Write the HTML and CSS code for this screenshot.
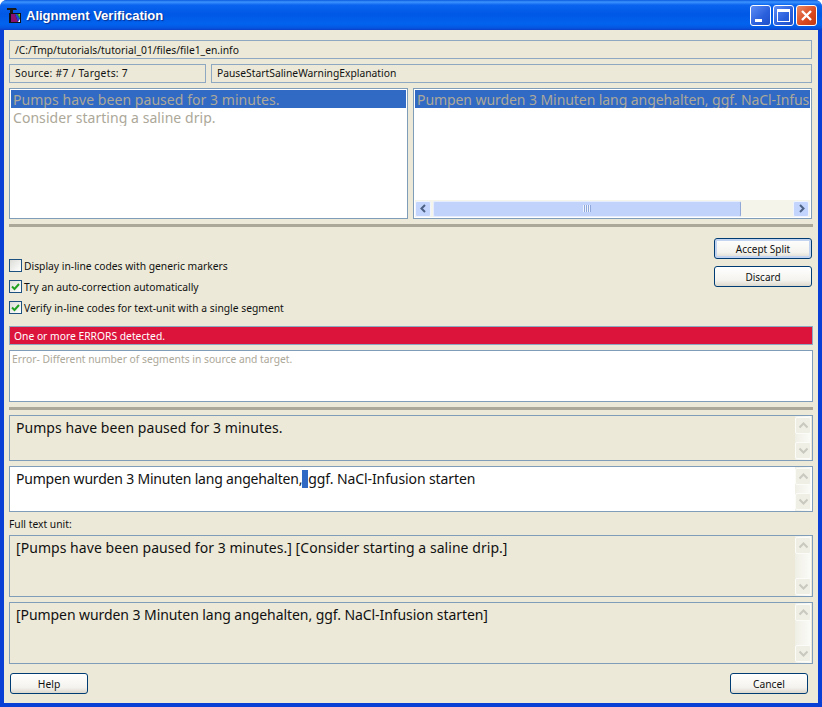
FILE: index.html
```html
<!DOCTYPE html>
<html lang="en">
<head>
<meta charset="utf-8">
<title>Alignment Verification</title>
<link rel="stylesheet" href="styles.css">
</head>
<body>
<div class="window">
  <header class="titlebar">
    <svg class="app-icon" width="16" height="16" viewBox="0 0 16 16"><path d="M1 1h9l1 2H1zM4 3h3v4H4z" fill="#1a1a1a"/><path d="M3 6h12v10H3z" fill="#101018"/><path d="M5 7h4l3 8H5z" fill="#8a1070"/><path d="M9 7h2l3 5v3h-2z" fill="#2040d8"/><path d="M11 7h3v5z" fill="#30b040"/><path d="M14 7v2l-1-2z" fill="#f0d020"/><path d="M14 12v3h-2z" fill="#f4f4f4"/></svg>
    <span class="title">Alignment Verification</span>
    <div class="controls">
      <span class="ctl ctl-min"><i class="min-glyph"></i></span>
      <span class="ctl ctl-max"><i class="max-glyph"></i></span>
      <span class="ctl ctl-close"><svg width="13" height="13" viewBox="0 0 13 13"><path d="M2 2l9 9M11 2l-9 9" stroke="#fff" stroke-width="2.4"/></svg></span>
    </div>
  </header>
  <main class="content">
    <div class="field path">/C:/Tmp/tutorials/tutorial_01/files/file1_en.info</div>
    <div class="row info">
      <div class="field source">Source: #7 / Targets: 7</div>
      <div class="field key">PauseStartSalineWarningExplanation</div>
    </div>
    <div class="row lists">
      <div class="list list-left">
        <div class="seg selected">Pumps have been paused for 3 minutes.</div>
        <div class="seg">Consider starting a saline drip.</div>
      </div>
      <div class="list list-right">
        <div class="seg selected de-full">Pumpen wurden 3 Minuten lang angehalten, ggf. NaCl-Infusion starten</div>
        <div class="hscroll">
          <span class="sbtn"><svg width="9" height="9" viewBox="0 0 9 9"><path d="M6 1L2.500 4.500 6 8" fill="none" stroke="#4d6185" stroke-width="2"/></svg></span>
          <span class="thumb"><i class="grip"></i></span>
          <span class="sbtn"><svg width="9" height="9" viewBox="0 0 9 9"><path d="M3 1l3.500 3.500L3 8" fill="none" stroke="#4d6185" stroke-width="2"/></svg></span>
        </div>
      </div>
    </div>
    <hr class="sep sep-top">
    <div class="row options">
      <div class="checks">
        <label class="check"><span class="box"></span>Display in-line codes with generic markers</label>
        <label class="check"><span class="box"><svg width="11" height="11" viewBox="0 0 11 11"><path d="M2 5.500l2.500 2.500L9 3" fill="none" stroke="#21a121" stroke-width="2"/></svg></span>Try an auto-correction automatically</label>
        <label class="check"><span class="box"><svg width="11" height="11" viewBox="0 0 11 11"><path d="M2 5.500l2.500 2.500L9 3" fill="none" stroke="#21a121" stroke-width="2"/></svg></span>Verify in-line codes for text-unit with a single segment</label>
      </div>
      <div class="actions">
        <button class="btn btn-wide btn-default">Accept Split</button>
        <button class="btn btn-wide">Discard</button>
      </div>
    </div>
    <div class="errorbar">One or more ERRORS detected.</div>
    <div class="errorbox">Error- Different number of segments in source and target.</div>
    <hr class="sep sep-bottom">
    <div class="editor short readonly">
      <div class="text">Pumps have been paused for 3 minutes.</div>
      <div class="vscroll">
        <span class="vbtn"><svg width="11" height="9" viewBox="0 0 11 9"><path d="M1.500 6.500l4-4 4 4" fill="none" stroke="#c9c9c0" stroke-width="2"/></svg></span>
        <span class="vbtn"><svg width="11" height="9" viewBox="0 0 11 9"><path d="M1.500 2.500l4 4 4-4" fill="none" stroke="#c9c9c0" stroke-width="2"/></svg></span>
      </div>
    </div>
    <div class="editor short white">
      <div class="text"><span class="de">Pumpen wurden 3 Minuten lang angehalten,</span><span class="caret"> </span><span class="de-tail">ggf. NaCl-Infusion starten</span></div>
      <div class="vscroll">
        <span class="vbtn"><svg width="11" height="9" viewBox="0 0 11 9"><path d="M1.500 6.500l4-4 4 4" fill="none" stroke="#c9c9c0" stroke-width="2"/></svg></span>
        <span class="vbtn"><svg width="11" height="9" viewBox="0 0 11 9"><path d="M1.500 2.500l4 4 4-4" fill="none" stroke="#c9c9c0" stroke-width="2"/></svg></span>
      </div>
    </div>
    <div class="unit-label">Full text unit:</div>
    <div class="editor tall readonly">
      <div class="text">[Pumps have been paused for 3 minutes.] [Consider starting a saline drip.]</div>
      <div class="vscroll">
        <span class="vbtn"><svg width="11" height="9" viewBox="0 0 11 9"><path d="M1.500 6.500l4-4 4 4" fill="none" stroke="#c9c9c0" stroke-width="2"/></svg></span>
        <span class="vbtn"><svg width="11" height="9" viewBox="0 0 11 9"><path d="M1.500 2.500l4 4 4-4" fill="none" stroke="#c9c9c0" stroke-width="2"/></svg></span>
      </div>
    </div>
    <div class="editor tall readonly next">
      <div class="text de-full">[Pumpen wurden 3 Minuten lang angehalten, ggf. NaCl-Infusion starten]</div>
      <div class="vscroll">
        <span class="vbtn"><svg width="11" height="9" viewBox="0 0 11 9"><path d="M1.500 6.500l4-4 4 4" fill="none" stroke="#c9c9c0" stroke-width="2"/></svg></span>
        <span class="vbtn"><svg width="11" height="9" viewBox="0 0 11 9"><path d="M1.500 2.500l4 4 4-4" fill="none" stroke="#c9c9c0" stroke-width="2"/></svg></span>
      </div>
    </div>
    <div class="row footer">
      <button class="btn btn-footer">Help</button>
      <button class="btn btn-footer">Cancel</button>
    </div>
  </main>
</div>
</body>
</html>
```
FILE: styles.css
```css
* { box-sizing: border-box; }
html, body { margin: 0; padding: 0; }
body { width: 822px; height: 707px; overflow: hidden; background: #fff; font-family: "Noto Sans", "DejaVu Sans", sans-serif; font-size: 10.3px; color: #111; }
.window { width: 822px; height: 707px; display: flex; flex-direction: column; background: #0a3fd6; border-radius: 7px 7px 0 0; overflow: hidden; }
.titlebar { height: 30px; flex: none; display: flex; align-items: center; padding: 0 5px 0 6px; color: #fff; background: linear-gradient(180deg, #0a5adf 0, #3d95ff 2px, #0a64ee 5px, #0058e6 14px, #0263ee 24px, #0555e0 28px, #0a3fc8 30px); }
.app-icon { flex: none; margin-right: 4px; }
.title { font: bold 13px "Liberation Sans", sans-serif; text-shadow: 1px 1px 1px #0a2f90; }
.controls { margin-left: auto; display: flex; gap: 2px; }
.ctl { width: 21px; height: 21px; border: 1px solid #fff; border-radius: 3px; display: flex; align-items: center; justify-content: center; background: linear-gradient(135deg, #5f8df5, #2a5fdc 60%, #1f4fc8); }
.ctl-close { background: linear-gradient(135deg, #e98a66, #d9481f 60%, #c23a12); }
.min-glyph { display: block; width: 7px; height: 3px; background: #fff; margin: 10px 5px 0 0; }
.max-glyph { display: block; width: 13px; height: 13px; border: 1px solid #fff; border-top-width: 3px; }
.content { flex: 1; margin: 0 4px 4px; background: #ece9d8; padding: 10px 5px 0 5px; display: flex; flex-direction: column; }
.row { display: flex; }
.field { height: 19px; border: 1px solid #8fa8c2; line-height: 17px; padding: 0 5px; white-space: nowrap; }
.path { flex: none; margin-right: 1px; padding-top: 1px; }
.info { gap: 5px; margin-top: 5px; margin-right: 1px; }
.source { width: 197px; letter-spacing: .25px; }
.key { flex: 1; }
.lists { gap: 5px; margin-top: 5px; height: 131px; margin-right: 1px; }
.list { background: #fff; border: 1px solid #7f9db9; padding: 1px; font-size: 14px; letter-spacing: .05px; color: #aca899; overflow: hidden; display: flex; flex-direction: column; }
.list-left { width: 399px; }
.list-right { flex: 1; }
.seg { height: 18px; line-height: 18px; padding: 1px 0 0 2px; white-space: nowrap; overflow: hidden; flex: none; }
.selected { background: #316ac5; }
.de { letter-spacing: -.2px; }
.de-tail { letter-spacing: -.1px; }
.de-full { letter-spacing: -.07px; }
.hscroll { margin-top: auto; height: 17px; display: flex; align-items: center; gap: 1px; background: #f5f4ea; padding-right: 1px; }
.sbtn { width: 16px; height: 16px; flex: none; display: flex; align-items: center; justify-content: center; background: #c3d5fc; border: 1px solid #f0f4fe; border-radius: 2px; }
.thumb { width: 308px; height: 16px; flex: none; margin-right: auto; margin-left: 1px; background: #c1d3fb; border: 1px solid #e4ecfe; border-right-color: #8fa8d8; border-radius: 2px; display: flex; align-items: center; justify-content: center; }
.grip { display: block; width: 8px; height: 7px; background: repeating-linear-gradient(90deg, #eef3fe 0 1px, #8ea8dc 1px 2px); }
.sep { border: 0; margin: 0; height: 3px; background: #aca899; flex: none; }
.sep-top { margin-top: 5px; }
.options { justify-content: space-between; margin-right: 1px; height: 99px; }
.checks { display: flex; flex-direction: column; gap: 8px; padding-top: 32px; }
.check { display: flex; align-items: center; height: 13px; }
.box { width: 13px; height: 13px; flex: none; border: 1px solid #1c5180; background: linear-gradient(135deg, #dcdcd7, #fff); margin-right: 2px; display: flex; align-items: center; justify-content: center; }
.actions { display: flex; flex-direction: column; gap: 7px; padding-top: 11px; }
.btn { font: inherit; color: #111; background: linear-gradient(180deg, #fff, #f4f3ee 70%, #dcd8ce); border: 1px solid #003c74; border-radius: 3px; padding: 0; height: 21px; }
.btn-wide { width: 98px; font-size: 10px; }
.btn-default { box-shadow: inset 0 0 0 2px #c3d4f0; }
.errorbar { height: 19px; background: #dc143c; color: #fff; border: 1px solid #8fa8c2; line-height: 17px; padding: 1px 0 0 4px; flex: none; }
.errorbox { height: 52px; margin-top: 5px; background: #fff; border: 1px solid #7f9db9; color: #aca899; padding: 1px 2px; line-height: 14px; flex: none; }
.sep-bottom { margin-top: 5px; }
.editor { display: flex; border: 1px solid #7f9db9; flex: none; font-size: 14px; letter-spacing: .05px; padding-right: 1px; }
.short { height: 46px; margin-top: 5px; }
.tall { height: 62px; }
.next { margin-top: 5px; }
.white { background: #fff; }
.text { flex: 1; padding: 3px 6px; line-height: 18px; white-space: nowrap; overflow: hidden; }
.caret { background: #316ac5; display: inline-block; width: 6px; height: 18px; vertical-align: top; }
.vscroll { width: 16px; flex: none; display: flex; flex-direction: column; justify-content: space-between; padding: 1px 0; background: linear-gradient(90deg, #f0efe6, #fbfbf8); }
.vbtn { height: 17px; display: flex; align-items: center; justify-content: center; background: #f0efe6; border: 1px solid #fbfbf8; border-radius: 2px; }
.unit-label { height: 23px; padding-top: 6px; line-height: 13px; flex: none; }
.footer { justify-content: space-between; margin-top: 9px; padding: 0 5px 0 1px; }
.btn-footer { width: 78px; }
```
